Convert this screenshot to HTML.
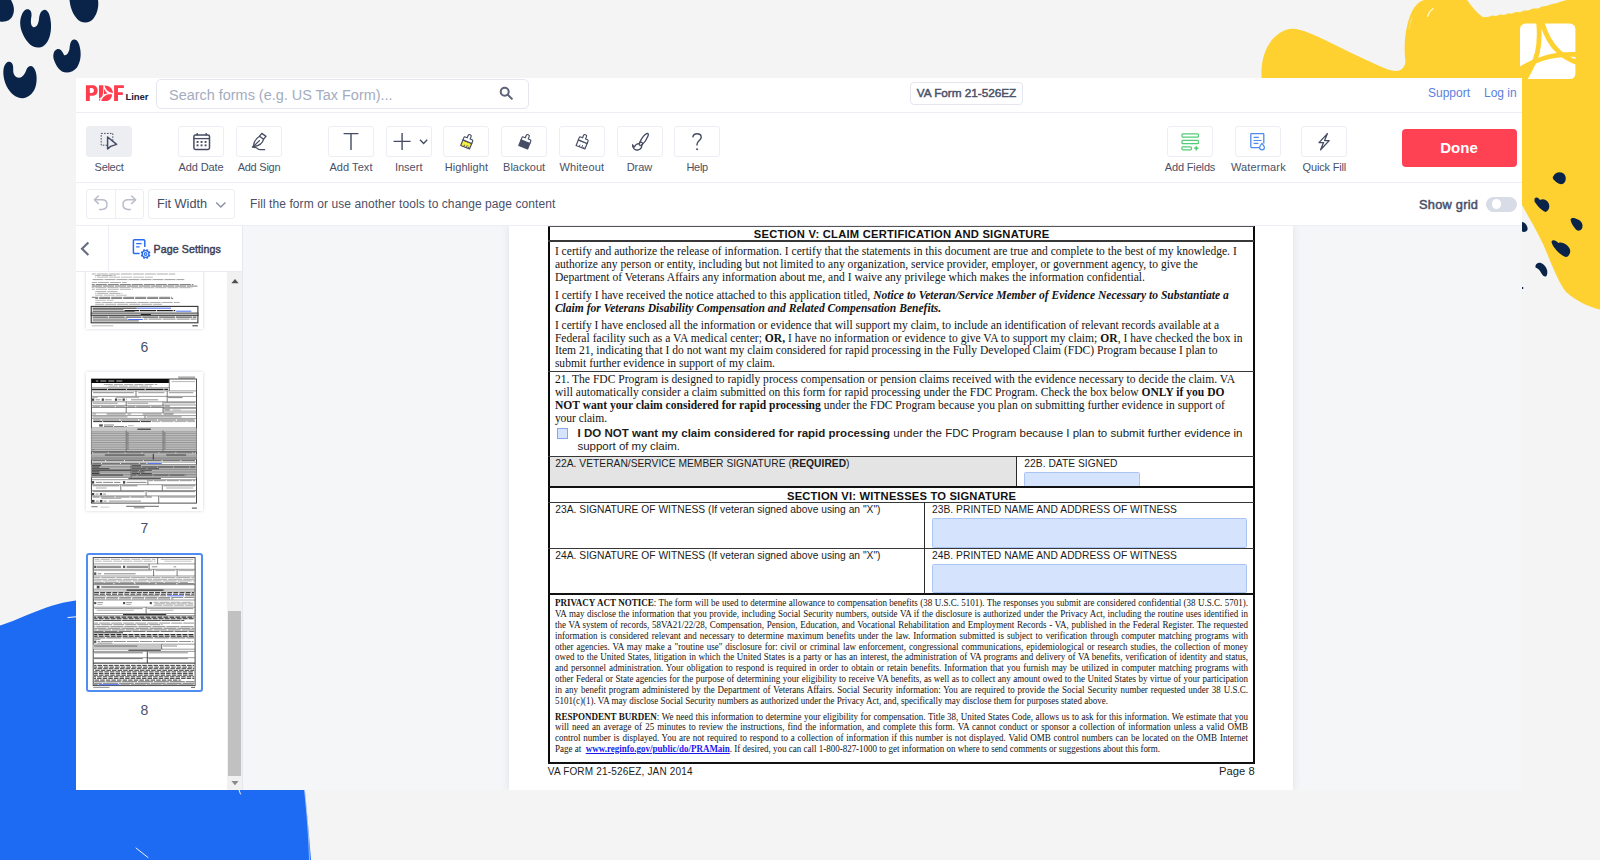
<!DOCTYPE html>
<html lang="en">
<head>
<meta charset="utf-8">
<title>VA Form 21-526EZ</title>
<style>
*{box-sizing:border-box;margin:0;padding:0}
html,body{width:1600px;height:860px;overflow:hidden}
body{background:#f4f4f4;font-family:"Liberation Sans",sans-serif;color:#454b60;position:relative}
.abs{position:absolute}
#bg{position:absolute;left:0;top:0;width:1600px;height:860px}
#app{position:absolute;left:76px;top:78px;width:1446px;height:712px;background:#fff;overflow:hidden}
#hdr{position:absolute;left:0;top:0;width:1446px;height:35px;border-bottom:1px solid #eceef3;background:#fff}
#tb{position:absolute;left:0;top:35px;width:1446px;height:70px;border-bottom:1px solid #eceef3;background:#fff}
#row3{position:absolute;left:0;top:105px;width:1446px;height:43px;border-bottom:1px solid #eceef3;background:#fff}
#side{position:absolute;left:0;top:148px;width:167px;height:564px;background:#fff;border-right:1px solid #e6e8ee;overflow:hidden}
#main{position:absolute;left:167px;top:148px;width:1279px;height:564px;background:#f5f6f8;overflow:hidden}
#page{position:absolute;left:266px;top:0;width:784px;height:564px;background:#fff;box-shadow:0 0 8px rgba(120,130,160,.18)}
.tbtn{position:absolute;top:13px;width:46px;height:31px;border:1px solid #eceef3;border-radius:3px;background:#fff}
.tbtn.sel{background:#eceef2;border-color:#eceef2}
.tbtn svg{position:absolute;left:-1px;top:-1px;width:46px;height:31px}
.tlbl{position:absolute;top:47px;width:90px;margin-left:-22px;text-align:center;font-size:11px;line-height:14px;color:#4a5068;white-space:nowrap}
.num{width:117px;text-align:center;font-size:14px;line-height:16px;color:#4a5068}

.s{font-family:"Liberation Serif",serif;color:#141414;white-space:nowrap;line-height:normal}
.a{font-family:"Liberation Sans",sans-serif;color:#1c1c1c;white-space:nowrap;line-height:normal}
.ab{font-family:"Liberation Sans",sans-serif;font-weight:bold;color:#111;white-space:nowrap;line-height:normal}
.lnk{color:#1a1aee;text-decoration:underline;font-weight:bold}
</style>
</head>
<body>
<svg id="bg" viewBox="0 0 1600 860">

<!-- yellow blob -->
<path fill="#fed130" d="M1262,82 C1259,58 1268,36 1287,29.5 C1298,26.5 1312,34 1330,42.5 C1350,52 1372,63.5 1388,69.5 C1397,72.5 1404,71 1405.5,62 C1403,44 1406,22 1413,9.5 C1417,3.5 1421,0 1425,0 L1467,0 C1471,5 1476,12.5 1483,17.2 L1489,16.8 L1492,15.6 L1496,15.9 L1500,14.6 L1504,14.9 L1508,13.4 L1512,13.6 L1516,12 L1520,12.2 L1524,10.4 L1528,10.5 L1533,8.6 L1538,8.4 L1542,6.4 L1547,5.8 L1552,4 L1557,3 L1562,1.2 L1567,0 L1600,0 L1600,309.5 C1592,307.5 1578,303 1566,292 C1557,280 1551,262 1543,244 C1536,229 1529,218 1521,203 L1521,82 Z"/>
<path fill="none" stroke="#fff4c8" stroke-width="1.3" stroke-linecap="round" d="M1427.5,16.5 C1428.5,13.5 1430.5,10.5 1433,8.6"/>
<path fill="none" stroke="#ffe27a" stroke-width="1" stroke-linecap="round" d="M1409.5,29 C1409.8,25 1410.5,21 1412,18"/>
<!-- white logo square -->
<rect x="1520" y="23.6" width="55.4" height="55.4" rx="5.5" fill="#fff"/>
<g fill="none" stroke="#fed130" stroke-width="4.8">
<path d="M1538.6,22 C1540.3,40 1538.8,55 1532,66 C1530,70 1527.5,75 1524,81"/>
<path d="M1541.8,22 C1546,36 1552,46 1559,52 C1564,56.5 1570,60 1577,62.5"/>
<path d="M1518,70.5 C1528,64 1538,59.5 1548,57 C1556,55 1562,54 1577,54.5"/>
</g>
<path fill="#fed130" d="M1519,70 L1530,64.5 L1525,80 L1519,80 Z"/>
<path fill="#fed130" d="M1537,22 L1544,22 L1541,30 Z"/>
<!-- navy dots on yellow -->
<g fill="#0a2449">
<path d="M1553.5,176 C1555,172.5 1560,171 1563.5,173.5 C1566.5,176 1566.5,181 1563.5,183.5 C1560,185.5 1556.5,182.5 1553.5,179.5 C1552.5,178 1552.5,177 1553.5,176 Z"/>
<path d="M1534.5,199 C1536,196.5 1538.5,197.5 1540,200 C1543,198.5 1546.5,199.5 1548.5,203 C1550.5,207 1548.5,211 1545.5,212 C1541.5,210.5 1537,205.5 1534.5,201.5 Z"/>
<path d="M1570.5,219.5 C1572,217 1575,218 1578,219.5 C1582,221.5 1583.5,225 1582,228.5 C1580.5,231 1577.5,231.5 1575.5,229 C1573,226 1571,223 1570.5,219.5 Z"/>
<path d="M1551.5,241.5 C1553,239 1556,240.5 1558.5,243 C1562,241.5 1566.5,244 1569,247.5 C1571.5,251 1570,255.5 1566.5,257 C1562.5,256.5 1558,252.5 1555,248.5 C1553,246 1551.5,243.5 1551.5,241.5 Z"/>
<path d="M1535.5,265.5 C1537,262 1540.5,262 1543.5,264.5 C1547,267.5 1548.5,272 1546.5,276 C1545,277.5 1543,276 1541.5,273.5 C1540,270.5 1538.5,268.5 1535.5,267.5 Z"/>
<path d="M1522,222 C1525.5,222.5 1528,226 1527.5,229.5 C1527,231.5 1524.5,232.5 1522,231.5 Z"/>
<rect x="1522" y="287" width="1.2" height="2"/>
</g>
<!-- navy blobs top-left -->
<g fill="#0a2449">
<path d="M0,0 L11,0 C14,5 15,11 12.5,16 C10.5,20 6,22.5 0,21.5 Z"/>
<path d="M26,9.5 C29.5,8.5 32,11 31.5,16 C30.5,21 30.5,26 33.5,27.2 C36.5,27.5 38.5,24 39,19 C39.5,13.5 41.5,9.8 45,9.8 C48.5,10.5 50.5,16 51,24 C51.5,33 49,42 43.5,46 C39.5,48.5 34,48 30,44.5 C24.5,39 20.5,31 20.2,24 C20,17.5 22.5,11 26,9.5 Z"/>
<path d="M69.5,0 L98,0 C99,6 97.5,13 93.5,18.5 C90.5,22.5 85,23.5 80.5,21.5 C75,18.5 70.5,10 69.5,0 Z"/>
<path d="M73,39.8 C76.5,38.8 79,42 80,48 C81.5,55 80.5,62 77,67.5 C73.5,72 67,73.8 62,71.5 C58,69 55.5,64.5 54,60 C52.5,55.5 53.5,50.5 57,49.2 C60.5,48.5 62.5,51.5 64,55 C66.5,56 68.5,53 69.5,49 C70,44.5 70.5,40.8 73,39.8 Z"/>
<path d="M8.5,61.8 C12,61 13.5,65 13.2,69.5 C13,74 15,77.5 19,77.8 C23,77.5 25,73.5 26.5,69.5 C28,66 31,65 33.5,67.5 C36.5,71 37.5,78 36,85 C34.5,92 29.5,97.5 23,98.3 C16,98.5 10,93 6.5,86 C3.5,79.5 2.5,72 4,67 C5,64 6.5,62.3 8.5,61.8 Z"/>
</g>
<!-- blue blob bottom-left -->
<path fill="#1d6af3" d="M0,625.5 C10,622.5 22,617 36,611.5 C50,606 64,601.5 80,600 L200,600 L296,700 C301,750 308,820 311,860 L0,860 Z"/>
<g fill="none" stroke="#f3f3f3" stroke-width="1" stroke-linecap="round">
<path d="M68,617.5 L76,616.8"/>
<path d="M136,848 L148,857.5"/>
<path d="M239,790 L240.5,794"/>
<path d="M304.5,790 C307,812 309,840 309.5,860" stroke-width=".7" stroke="#cfe0ff"/>
</g>

</svg>
<div id="app">
  <div id="hdr">

<svg class="abs" style="left:0;top:0" width="80" height="35" viewBox="76 78 80 35">
<g fill="#ff3d4d">
<path fill-rule="evenodd" d="M85.9,85.2 h6.1 c3.8,0 5.6,2 5.6,5.2 c0,3.4 -2,5.4 -5.8,5.4 h-2 v5.2 h-3.9 z M89.8,88 v5 h1.7 c1.6,0 2.4,-.9 2.4,-2.5 c0,-1.6 -.8,-2.5 -2.4,-2.5 z"/>
<path d="M99,85.3 H103.3 C103.4,89 103.3,93 102.6,95.3 C102,97 100.9,98 99,98.5 Z"/>
<path d="M99.1,99.2 L100.7,98.5 L99.9,100.5 L99.1,100.9 Z"/>
<path d="M104.5,85.4 C108.9,85.1 112.5,88 113,92.9 C110.2,92.8 105.8,90.8 104.5,85.4 Z"/>
<path d="M103.9,88.6 C104.8,90.6 106,92.3 107.5,93.4 L103.9,94.2 Z"/>
<path d="M101.1,101 H106 C109.4,101 111.7,98.6 112.1,94.5 C108,93.8 103.4,95.4 101.1,101 Z"/>
<path d="M114.1,85.2 H123.9 V88 H118 V92.3 H122.8 V94.9 H118 V101 H114.1 Z"/>
</g>
</svg>
<div class="abs" style="left:49.5px;top:13px;font-size:9.6px;font-weight:bold;color:#1b2340;line-height:11px;letter-spacing:-.1px">Liner</div>
<div class="abs" style="left:80px;top:1px;width:373px;height:30px;border:1px solid #e4e7f0;border-radius:5px"></div>
<div class="abs" id="ph" style="left:93px;top:8px;font-size:14.45px;line-height:18px;color:#a4acc0;white-space:nowrap">Search forms (e.g. US Tax Form)...</div>
<svg class="abs" style="left:420px;top:6px" width="20" height="20" viewBox="0 0 20 20"><circle cx="8.7" cy="7.8" r="4" fill="none" stroke="#5d6378" stroke-width="2"/><path d="M11.7,10.8 L15.8,14.7" stroke="#5d6378" stroke-width="2" stroke-linecap="round"/></svg>
<div class="abs" style="left:834px;top:4px;width:113px;height:23px;border:1px solid #e4e7f0;border-radius:4px"></div>
<div class="abs" id="ttl" style="left:834px;top:4px;width:113px;height:23px;line-height:22px;text-align:center;font-size:11.8px;font-weight:normal;-webkit-text-stroke:.45px #4a5068;letter-spacing:-.05px;color:#4a5068;white-space:nowrap">VA Form 21-526EZ</div>
<div class="abs" id="sup" style="left:1352px;top:7px;font-size:12px;line-height:16px;color:#5b80dd;white-space:nowrap">Support</div>
<div class="abs" id="log" style="left:1408px;top:7px;font-size:12px;line-height:16px;color:#5b80dd;white-space:nowrap">Log in</div>

  </div>
  <div id="tb">
<div class="tbtn sel" style="left:10px"><svg viewBox="0 0 46 31"><rect x="15.2" y="7.4" width="11.6" height="11.8" fill="none" stroke="#454c63" stroke-width="1" stroke-dasharray="1.6 1.3"/><path d="M21.6,11 L21.6,23 L24.6,20.4 L30.6,18.4 Z" fill="#eceef2" stroke="#454c63" stroke-width="1.5" stroke-linejoin="round"/></svg></div><div class="tlbl" id="l_select" style="letter-spacing:-0.300px;left:10px">Select</div>
<div class="tbtn" style="left:102px"><svg viewBox="0 0 46 31"><rect x="15.9" y="9" width="15.6" height="14.4" rx="1.6" fill="none" stroke="#454c63" stroke-width="1.5"/><path d="M15.9,12.6 H31.5" stroke="#454c63" stroke-width="1.3"/><path d="M19.2,7 V9.6 M28.2,7 V9.6" stroke="#454c63" stroke-width="1.3"/><g fill="#454c63"><rect x="18.6" y="15" width="1.9" height="1.9"/><rect x="22.6" y="15" width="1.9" height="1.9"/><rect x="26.6" y="15" width="1.9" height="1.9"/><rect x="18.6" y="18.4" width="1.9" height="1.9"/><rect x="22.6" y="18.4" width="1.9" height="1.9"/><rect x="26.6" y="18.4" width="1.9" height="1.9"/></g></svg></div><div class="tlbl" id="l_date" style="letter-spacing:-0.112px;left:102px">Add Date</div>
<div class="tbtn" style="left:160px"><svg viewBox="0 0 46 31"><g fill="none" stroke="#454c63" stroke-width="1.3" stroke-linejoin="round" stroke-linecap="round"><path d="M17.3,20.6 C17.8,16.2 19.8,12.4 23.6,10.2 L27.6,13.2 C26.6,17.4 23.2,20 17.3,20.6 Z"/><path d="M23.6,10.2 L25.8,7.4 L30,10.4 L27.6,13.2"/><path d="M17.3,20.6 L23.4,14.6"/><path d="M16.4,21 C19,21.2 20.8,21.6 21.6,22.6 C22.2,23.4 23,23.7 24.4,23.7 L28.6,23.7"/></g></svg></div><div class="tlbl" id="l_sign" style="letter-spacing:-0.238px;left:160px">Add Sign</div>
<div class="tbtn" style="left:252px"><svg viewBox="0 0 46 31"><path d="M15.6,7.6 H30.4 M23,7.6 V24" stroke="#454c63" stroke-width="1.4" fill="none"/></svg></div><div class="tlbl" id="l_text" style="letter-spacing:0.050px;left:252px">Add Text</div>
<div class="tbtn" style="left:309.7px"><svg viewBox="0 0 46 31"><path d="M7.6,15.4 H24.6 M16.1,7 V24" stroke="#454c63" stroke-width="1.4" fill="none"/><path d="M34,13.8 L37.6,17.4 L41.2,13.8" stroke="#454c63" stroke-width="1.4" fill="none"/></svg></div><div class="tlbl" id="l_insert" style="letter-spacing:0.017px;left:309.7px">Insert</div>
<div class="tbtn" style="left:367.4px"><svg viewBox="0 0 46 31"><g transform="translate(24.2,16) rotate(22) scale(.88)"><path d="M-5.4,-0.4 H5.4 V6.4 H-5.4 Z" fill="#f6ee3c" stroke="#454c63" stroke-width="1.3" stroke-linejoin="round"/><path d="M-1.6,6.4 V4 M1.4,6.4 V3.4 M3.6,6.4 V4.4" stroke="#454c63" stroke-width="1"/><path d="M-5.4,-0.4 V-3.2 C-5.4,-4 -5,-4.4 -4.2,-4.4 H-1.8 V-7.6 C-1.8,-9.4 1.8,-9.4 1.8,-7.6 V-4.4 H4.2 C5,-4.4 5.4,-4 5.4,-3.2 V-0.4 Z" fill="#fff" stroke="#454c63" stroke-width="1.3" stroke-linejoin="round"/></g></svg></div><div class="tlbl" id="l_hl" style="letter-spacing:0.044px;left:367.4px">Highlight</div>
<div class="tbtn" style="left:425.1px"><svg viewBox="0 0 46 31"><g transform="translate(24.3,16) rotate(22) scale(.88)"><path d="M-5.4,-0.4 H5.4 V6.4 H-5.4 Z" fill="#454c63" stroke="#454c63" stroke-width="1.3" stroke-linejoin="round"/><path d="M-5.4,-0.4 V-3.2 C-5.4,-4 -5,-4.4 -4.2,-4.4 H-1.8 V-7.6 C-1.8,-9.4 1.8,-9.4 1.8,-7.6 V-4.4 H4.2 C5,-4.4 5.4,-4 5.4,-3.2 V-0.4 Z" fill="#fff" stroke="#454c63" stroke-width="1.3" stroke-linejoin="round"/></g></svg></div><div class="tlbl" id="l_bo" style="letter-spacing:-0.025px;left:425.1px">Blackout</div>
<div class="tbtn" style="left:482.8px"><svg viewBox="0 0 46 31"><g transform="translate(23.6,16) rotate(22) scale(.88)"><path d="M-5.4,-0.4 H5.4 V6.4 H-5.4 Z" fill="#fff" stroke="#454c63" stroke-width="1.3" stroke-linejoin="round"/><path d="M-1.6,6.4 V4 M1.4,6.4 V3.4 M3.6,6.4 V4.4" stroke="#454c63" stroke-width="1"/><path d="M-5.4,-0.4 V-3.2 C-5.4,-4 -5,-4.4 -4.2,-4.4 H-1.8 V-7.6 C-1.8,-9.4 1.8,-9.4 1.8,-7.6 V-4.4 H4.2 C5,-4.4 5.4,-4 5.4,-3.2 V-0.4 Z" fill="#fff" stroke="#454c63" stroke-width="1.3" stroke-linejoin="round"/></g></svg></div><div class="tlbl" id="l_wo" style="letter-spacing:0.175px;left:482.8px">Whiteout</div>
<div class="tbtn" style="left:540.5px"><svg viewBox="0 0 46 31"><g fill="none" stroke="#454c63" stroke-width="1.3" stroke-linejoin="round" stroke-linecap="round"><path d="M22.6,16.6 C25,11.6 28.2,8 30.2,7.4 C31.4,7.2 31.6,8.6 31,10 C29.6,13.6 27.6,16.6 25,18.8"/><ellipse cx="23.8" cy="17.8" rx="1.8" ry="1.5" transform="rotate(-40 23.8 17.8)"/><path d="M22.2,17.6 C19.6,17.6 18,19.4 17.4,21 C16.8,20.6 16.2,19.8 15.6,18.8 C15,22.4 18.6,24.6 21.4,23.8 C23.6,23.2 24.8,21.4 24.8,19.2"/></g></svg></div><div class="tlbl" id="l_draw" style="letter-spacing:-0.025px;left:540.5px">Draw</div>
<div class="tbtn" style="left:598.2px"><svg viewBox="0 0 46 31"><path d="M18.8,11.4 C19.2,8.8 20.8,7.8 23,7.8 C25.6,7.8 27.2,9.2 27.2,11.2 C27.2,14.6 23,14.6 23,18.6 V19.6" fill="none" stroke="#454c63" stroke-width="1.4"/><rect x="22.2" y="22.4" width="1.7" height="1.7" fill="#454c63"/></svg></div><div class="tlbl" id="l_help" style="letter-spacing:-0.300px;left:598.2px">Help</div>
<div class="tbtn" style="left:1091px"><svg viewBox="0 0 46 31"><g fill="none" stroke="#52cc76" stroke-width="1.2"><rect x="14.9" y="7.8" width="16.6" height="3.3" rx="1"/><rect x="14.9" y="14.4" width="16.6" height="3.3" rx="1"/><rect x="14.9" y="20.8" width="9.6" height="3" rx="1"/></g><path d="M29.3,20.2 V24.4 M27.2,22.3 H31.4" stroke="#52cc76" stroke-width="1.6"/></svg></div><div class="tlbl" id="l_fields" style="letter-spacing:-0.160px;left:1091px">Add Fields</div>
<div class="tbtn" style="left:1159.4px"><svg viewBox="0 0 46 31"><g fill="none" stroke="#4d8bf1"><path d="M26.2,21.6 H16.6 C16.1,21.6 15.8,21.3 15.8,20.8 V8.4 C15.8,7.9 16.1,7.6 16.6,7.6 H28 C28.5,7.6 28.8,7.9 28.8,8.4 V17.6" stroke-width="1.3"/><path d="M18.6,11.4 H23.8 M18.6,14.5 H26.6 M18.6,17.3 H23.4" stroke-width="1.2"/><path d="M27,17.4 C28.2,18.8 29.4,20 29.4,21.5 C29.4,22.9 28.3,23.8 27,23.8 C25.7,23.8 24.6,22.9 24.6,21.5 C24.6,20 25.8,18.8 27,17.4 Z" stroke-width="1.2" fill="#fff"/></g></svg></div><div class="tlbl" id="l_wm" style="letter-spacing:0.178px;left:1159.4px">Watermark</div>
<div class="tbtn" style="left:1225.3px"><svg viewBox="0 0 46 31"><path d="M26.4,7.6 L18,16.6 H22.6 L19.6,23.8 L28.2,14.6 H23.6 Z" fill="none" stroke="#454c63" stroke-width="1.3" stroke-linejoin="round"/></svg></div><div class="tlbl" id="l_qf" style="letter-spacing:-0.180px;left:1225.3px">Quick Fill</div>
<div class="abs" id="done" style="left:1325.5px;top:16px;width:115px;height:38px;border-radius:4px;background:#ff4253;color:#fff;font-weight:bold;font-size:15px;line-height:37px;text-align:center">Done</div>

  </div>
  <div id="row3">

<div class="abs" style="left:10px;top:6px;width:29.5px;height:29.5px;border:1px solid #eceef3;border-radius:3px 0 0 3px"></div>
<div class="abs" style="left:38.5px;top:6px;width:29.5px;height:29.5px;border:1px solid #eceef3;border-radius:0 3px 3px 0"></div>
<svg class="abs" style="left:10px;top:6px" width="58" height="30" viewBox="0 0 58 30"><g fill="none" stroke="#b9bdc9" stroke-width="1.5" stroke-linecap="round" stroke-linejoin="round"><path d="M12.4,7 L8.4,10.8 L12.4,14.6"/><path d="M8.6,10.8 H16 C19.2,10.8 21,12.8 21,15.6 C21,18.4 19.2,20.4 16,20.4 H13.6"/><path d="M45.6,7 L49.6,10.8 L45.6,14.6"/><path d="M49.4,10.8 H42 C38.8,10.8 37,12.8 37,15.6 C37,18.4 38.8,20.4 42,20.4 H44.4"/></g></svg>
<div class="abs" style="left:72px;top:6px;width:87px;height:29.5px;border:1px solid #eceef3;border-radius:3px"></div>
<div class="abs" id="fitw" style="left:81px;top:13px;font-size:12.7px;line-height:16px;color:#454c63;white-space:nowrap">Fit Width</div>
<svg class="abs" style="left:138px;top:15.6px" width="14" height="12" viewBox="0 0 14 12"><path d="M2.2,3.6 L6.8,8 L11.4,3.6" fill="none" stroke="#8a90a2" stroke-width="1.4"/></svg>
<div class="abs" id="fill" style="left:174px;top:14px;font-size:12px;letter-spacing:.08px;line-height:14px;color:#4a5068;white-space:nowrap">Fill the form or use another tools to change page content</div>
<div class="abs" id="sg" style="left:1343px;top:14px;font-size:12.8px;font-weight:normal;-webkit-text-stroke:.5px #4a5068;letter-spacing:.25px;line-height:16px;color:#4a5068;white-space:nowrap">Show grid</div>
<div class="abs" style="left:1410px;top:13.5px;width:30.5px;height:15.5px;border-radius:8px;background:#d8dce7"></div>
<div class="abs" style="left:1415.6px;top:16.3px;width:9.4px;height:9.4px;border-radius:5px;background:#fff"></div>

  </div>
  <div id="side">
<!--SIDE_START-->
<div class="abs" style="left:0;top:0;width:166px;height:46px;background:#fff;border-bottom:1px solid #e9ebf0;z-index:3"></div>
<div class="abs" style="left:32px;top:0;width:1px;height:45px;background:#eceef3;z-index:4"></div>
<svg class="abs" style="left:0;top:0;z-index:4" width="32" height="45" viewBox="0 0 32 45"><path d="M12.4,16.6 L6,22.8 L12.4,29" fill="none" stroke="#656b80" stroke-width="2.1"/></svg>
<svg class="abs" style="left:54px;top:10px;z-index:4" width="24" height="26" viewBox="0 0 24 26"><g fill="none" stroke="#2a6cf0" stroke-width="1.5" stroke-linejoin="round"><path d="M9.6,17.6 H4.6 C3.8,17.6 3.4,17.2 3.4,16.4 V5 C3.4,4.2 3.8,3.8 4.6,3.8 H13.6 C14.4,3.8 14.8,4.2 14.8,5 V11"/><path d="M6.2,7.6 H11.6 M6.2,10.8 H9.6" stroke-width="1.3"/><circle cx="15.6" cy="18.0" r="5.2" fill="#fff" stroke="none"/><path d="M18.83,19.34L20.13,19.88M16.94,21.23L17.48,22.53M14.26,21.23L13.72,22.53M12.37,19.34L11.07,19.88M12.37,16.66L11.07,16.12M14.26,14.77L13.72,13.47M16.94,14.77L17.48,13.47M18.83,16.66L20.13,16.12" stroke-width="1.9" stroke-linecap="butt"/><circle cx="15.6" cy="18.0" r="3.3" stroke-width="1.3" fill="#fff"/><circle cx="15.6" cy="18.0" r="1.35" stroke-width="1.1"/></g></svg>
<div class="abs" id="pset" style="left:77.5px;top:16px;font-size:10.6px;font-weight:normal;-webkit-text-stroke:.45px #3d4258;line-height:14px;color:#3d4258;white-space:nowrap;z-index:4;letter-spacing:.12px">Page Settings</div>
<div class="abs" style="left:10px;top:-36px;width:117px;height:139px;background:#fff;box-shadow:0 0 3px rgba(90,100,130,.28)"><svg width="117" height="139" viewBox="0 0 117 139" fill="none"><path d="M5.8,84.0H89.2" stroke="#999" stroke-width="0.8" stroke-dasharray="11 1" stroke-dashoffset="7.0"/><path d="M9.2,85.6H29.5" stroke="#999" stroke-width="0.8" stroke-dasharray="11 1" stroke-dashoffset="5.5"/><path d="M9.2,87.2H66.9" stroke="#aaa" stroke-width="0.8" stroke-dasharray="11 1" stroke-dashoffset="10.1"/><path d="M5.8,89.6H98.3" stroke="#888" stroke-width="0.8" stroke-dasharray="11 1" stroke-dashoffset="11.3"/><path d="M5.8,92.5H40.6" stroke="#999" stroke-width="0.8" stroke-dasharray="11 1" stroke-dashoffset="5.7"/><path d="M5.8,94.7H107.4" stroke="#444" stroke-width="0.8" stroke-dasharray="11 1" stroke-dashoffset="8.0"/><path d="M5.8,96.1H111.5" stroke="#666" stroke-width="0.8" stroke-dasharray="11 1" stroke-dashoffset="0.7"/><path d="M5.8,97.7H106.4" stroke="#999" stroke-width="0.8" stroke-dasharray="11 1" stroke-dashoffset="8.4"/><path d="M5.8,99.4H46.7" stroke="#aaa" stroke-width="0.8" stroke-dasharray="11 1" stroke-dashoffset="7.8"/><path d="M9.2,101.6H31.5" stroke="#999" stroke-width="0.8" stroke-dasharray="11 1" stroke-dashoffset="11.9"/><path d="M9.2,103.4H36.2" stroke="#999" stroke-width="0.8" stroke-dasharray="11 1" stroke-dashoffset="9.9"/><path d="M9.2,105.2H41.0" stroke="#aaa" stroke-width="0.8" stroke-dasharray="11 1" stroke-dashoffset="3.4"/><path d="M5.8,107.3H86.2" stroke="#555" stroke-width="0.8" stroke-dasharray="11 1" stroke-dashoffset="4.6"/><path d="M9.2,108.5H87.2" stroke="#666" stroke-width="0.8" stroke-dasharray="11 1" stroke-dashoffset="8.0"/><path d="M9.2,110.3H27.4" stroke="#aaa" stroke-width="0.8" stroke-dasharray="11 1" stroke-dashoffset="0.3"/><path d="M9.2,112.5H93.6" stroke="#999" stroke-width="0.8" stroke-dasharray="11 1" stroke-dashoffset="5.5"/><path d="M9.2,114.3H76.0" stroke="#999" stroke-width="0.8" stroke-dasharray="11 1" stroke-dashoffset="2.0"/><rect x="5.2" y="116.4" width="106.7" height="16.4" fill="none" stroke="#333" stroke-width="1.1"/><path d="M6.6,118.2H50.7" stroke="#333" stroke-width="1"/><path d="M50.7,118.2H85.1" stroke="#4b6df0" stroke-width="1"/><path d="M6.6,119.8H37.6" stroke="#555" stroke-width="0.9"/><path d="M38.6,120.6H89.2" stroke="#222" stroke-width="1.1" stroke-dasharray="16 .8" stroke-dashoffset="1.4"/><path d="M90.2,121.2H105.4" stroke="#4b6df0" stroke-width="1"/><path d="M6.6,121.4H48.7" stroke="#555" stroke-width="0.9"/><rect x="5.2" y="123.0" width="106.7" height="2.6" fill="#bbb" stroke="#333" stroke-width="0.8"/><path d="M54.8,124.5H64.9" stroke="#222" stroke-width="1"/><path d="M6.6,127.1H110.4" stroke="#333" stroke-width="1" stroke-dasharray="16 .8" stroke-dashoffset="0.7"/><path d="M6.6,129.1H41.6" stroke="#555" stroke-width="0.9"/><path d="M42.2,129.5H56.8" stroke="#4b6df0" stroke-width="1"/><path d="M57.8,129.1H110.4" stroke="#666" stroke-width="0.8" stroke-dasharray="13 1" stroke-dashoffset="9.2"/><path d="M6.6,130.9H52.8" stroke="#555" stroke-width="0.9"/><path d="M5.8,135.8H27.4" stroke="#999" stroke-width="0.7"/><path d="M106.4,135.8H111.9" stroke="#333" stroke-width="1"/></svg></div>
<div class="abs num" style="left:10px;top:113px">6</div>
<div class="abs" style="left:10px;top:145.5px;width:117px;height:139px;background:#fff;box-shadow:0 0 3px rgba(90,100,130,.28)"><svg width="117" height="139" viewBox="0 0 117 139" fill="none"><path d="M92.0,5.1H109.1" stroke="#666" stroke-width="0.8"/><path d="M92.9,6.3H109.1" stroke="#888" stroke-width="0.7"/><rect x="5.4" y="7.0" width="105.1" height="124.1" fill="none" stroke="#3a3a3a" stroke-width="0.9"/><rect x="5.4" y="7.0" width="77.5" height="4.0" fill="#0a0a0a"/><path d="M9.9,9.0H37.0" stroke="#ddd" stroke-width="0.8" stroke-dasharray="6 2" stroke-dashoffset="3.6"/><path d="M83.3,7.0V18.9" stroke="#444" stroke-width="0.7"/><path d="M85.7,9.6H109.1" stroke="#999" stroke-width="0.7"/><path d="M17.1,12.5H71.2" stroke="#888" stroke-width="0.7" stroke-dasharray="9 1.2" stroke-dashoffset="9.5"/><path d="M20.7,14.1H65.8" stroke="#888" stroke-width="0.7" stroke-dasharray="9 1.2" stroke-dashoffset="8.4"/><path d="M5.4,15.7H83.3" stroke="#555" stroke-width="0.6"/><path d="M6.0,17.3H82.1" stroke="#222" stroke-width="1.2" stroke-dasharray="18 .8" stroke-dashoffset="2.9"/><path d="M5.4,18.9H110.5" stroke="#555" stroke-width="0.6"/><path d="M5.4,24.4H110.5" stroke="#555" stroke-width="0.6"/><path d="M5.4,29.8H110.5" stroke="#555" stroke-width="0.6"/><path d="M5.4,35.5H110.5" stroke="#555" stroke-width="0.6"/><path d="M5.4,40.9H110.5" stroke="#555" stroke-width="0.6"/><path d="M5.4,46.4H110.5" stroke="#555" stroke-width="0.6"/><path d="M5.4,55.9H110.5" stroke="#555" stroke-width="0.6"/><path d="M5.4,58.3H110.5" stroke="#555" stroke-width="0.6"/><path d="M7.2,20.7H47.8" stroke="#666" stroke-width="0.8"/><path d="M52.3,20.7H78.4" stroke="#777" stroke-width="0.8"/><path d="M83.0,20.7H107.3" stroke="#777" stroke-width="0.8"/><path d="M50.0,18.9V24.4" stroke="#444" stroke-width="0.7"/><path d="M81.2,18.9V29.8" stroke="#444" stroke-width="0.7"/><path d="M6.3,25.6H11.7" stroke="#888" stroke-width="0.7"/><path d="M29.8,25.6H53.2" stroke="#888" stroke-width="0.7"/><path d="M82.1,25.6H96.5" stroke="#666" stroke-width="0.8"/><rect x="6.0" y="26.5" width="2.2" height="2.3" fill="#444"/><rect x="15.7" y="26.5" width="2.2" height="2.3" fill="#444"/><rect x="28.9" y="26.5" width="2.2" height="2.3" fill="#444"/><rect x="36.6" y="26.5" width="2.2" height="2.3" fill="#444"/><path d="M9.6,27.8H13.9" stroke="#777" stroke-width="0.8"/><path d="M18.9,27.8H25.8" stroke="#777" stroke-width="0.8"/><path d="M31.9,27.8H35.5" stroke="#777" stroke-width="0.8"/><path d="M39.9,27.8H40.9" stroke="#777" stroke-width="0.8"/><path d="M45.1,27.8H72.1" stroke="#777" stroke-width="0.8"/><path d="M40.2,29.8V40.9" stroke="#444" stroke-width="0.7"/><path d="M77.0,29.8V40.9" stroke="#444" stroke-width="0.7"/><path d="M6.7,31.2H31.6" stroke="#777" stroke-width="0.8"/><path d="M41.5,31.2H62.2" stroke="#777" stroke-width="0.8"/><path d="M78.1,30.8H109.1" stroke="#666" stroke-width="0.8"/><path d="M5.4,33.4H77.0" stroke="#666" stroke-width="0.6"/><path d="M6.7,34.8H38.8" stroke="#666" stroke-width="0.8" stroke-dasharray="14 1" stroke-dashoffset="6.9"/><path d="M41.5,34.8H75.7" stroke="#666" stroke-width="0.8" stroke-dasharray="14 1" stroke-dashoffset="6.3"/><path d="M77.0,33.0H110.5" stroke="#555" stroke-width="0.6"/><path d="M78.4,34.1H83.9" stroke="#555" stroke-width="0.8"/><path d="M77.0,36.6H110.5" stroke="#555" stroke-width="0.6"/><path d="M78.4,37.9H83.9" stroke="#555" stroke-width="0.8"/><path d="M86.6,37.9H94.7" stroke="#aaa" stroke-width="0.7"/><path d="M77.0,39.1H110.5" stroke="#555" stroke-width="0.6"/><path d="M6.7,42.0H9.9" stroke="#777" stroke-width="0.8"/><path d="M20.7,42.0H39.7" stroke="#666" stroke-width="0.8"/><path d="M41.5,42.0H45.1" stroke="#777" stroke-width="0.8"/><path d="M56.8,42.0H75.7" stroke="#666" stroke-width="0.8"/><path d="M77.5,42.0H87.5" stroke="#555" stroke-width="0.9"/><path d="M5.4,43.6H110.5" stroke="#555" stroke-width="0.6"/><path d="M59.0,43.6V46.4" stroke="#444" stroke-width="0.7"/><path d="M6.7,44.9H41.5" stroke="#777" stroke-width="0.8"/><path d="M60.8,44.9H95.6" stroke="#777" stroke-width="0.8"/><path d="M7.2,48.0H109.1" stroke="#555" stroke-width="0.9" stroke-dasharray="18 .8" stroke-dashoffset="10.5"/><path d="M7.2,49.6H64.9" stroke="#333" stroke-width="1" stroke-dasharray="18 .8" stroke-dashoffset="8.8"/><path d="M65.8,49.6H109.1" stroke="#888" stroke-width="0.7" stroke-dasharray="12 1" stroke-dashoffset="3.5"/><rect x="13.2" y="52.3" width="3.6" height="2.3" fill="#555"/><path d="M18.0,53.0H28.0" stroke="#666" stroke-width="0.8"/><path d="M18.0,54.5H40.9" stroke="#666" stroke-width="0.8" stroke-dasharray="10 1" stroke-dashoffset="11.8"/><path d="M42.0,53.7H47.8" stroke="#999" stroke-width="0.7"/><rect x="5.4" y="56.1" width="105.1" height="23.8" fill="#c8c8c8"/><path d="M51.4,57.2H64.9" stroke="#222" stroke-width="1"/><path d="M5.4,59.9H110.5" stroke="#666" stroke-width="0.5"/><path d="M5.4,61.6H110.5" stroke="#666" stroke-width="0.5"/><path d="M5.4,63.4H110.5" stroke="#666" stroke-width="0.5"/><path d="M5.4,65.2H110.5" stroke="#666" stroke-width="0.5"/><path d="M5.4,66.9H110.5" stroke="#666" stroke-width="0.5"/><path d="M5.4,68.7H110.5" stroke="#666" stroke-width="0.5"/><path d="M5.4,70.5H110.5" stroke="#666" stroke-width="0.5"/><path d="M5.4,72.2H110.5" stroke="#666" stroke-width="0.5"/><path d="M5.4,74.0H110.5" stroke="#666" stroke-width="0.5"/><path d="M5.4,75.8H110.5" stroke="#666" stroke-width="0.5"/><path d="M5.4,77.5H110.5" stroke="#666" stroke-width="0.5"/><path d="M5.4,79.3H110.5" stroke="#666" stroke-width="0.5"/><path d="M40.2,58.3V79.9" stroke="#555" stroke-width="0.6"/><path d="M77.0,58.3V79.9" stroke="#555" stroke-width="0.6"/><path d="M40.9,60.8H42.7" stroke="#666" stroke-width="0.7"/><path d="M77.7,60.8H79.5" stroke="#666" stroke-width="0.7"/><path d="M40.9,62.5H42.7" stroke="#666" stroke-width="0.7"/><path d="M77.7,62.5H79.5" stroke="#666" stroke-width="0.7"/><path d="M40.9,64.3H42.7" stroke="#666" stroke-width="0.7"/><path d="M77.7,64.3H79.5" stroke="#666" stroke-width="0.7"/><path d="M40.9,66.1H42.7" stroke="#666" stroke-width="0.7"/><path d="M77.7,66.1H79.5" stroke="#666" stroke-width="0.7"/><path d="M40.9,67.8H42.7" stroke="#666" stroke-width="0.7"/><path d="M77.7,67.8H79.5" stroke="#666" stroke-width="0.7"/><path d="M40.9,69.6H42.7" stroke="#666" stroke-width="0.7"/><path d="M77.7,69.6H79.5" stroke="#666" stroke-width="0.7"/><path d="M40.9,71.4H42.7" stroke="#666" stroke-width="0.7"/><path d="M77.7,71.4H79.5" stroke="#666" stroke-width="0.7"/><path d="M40.9,73.1H42.7" stroke="#666" stroke-width="0.7"/><path d="M77.7,73.1H79.5" stroke="#666" stroke-width="0.7"/><path d="M40.9,74.9H42.7" stroke="#666" stroke-width="0.7"/><path d="M77.7,74.9H79.5" stroke="#666" stroke-width="0.7"/><path d="M40.9,76.7H42.7" stroke="#666" stroke-width="0.7"/><path d="M77.7,76.7H79.5" stroke="#666" stroke-width="0.7"/><path d="M6.3,77.7H8.1" stroke="#666" stroke-width="0.7"/><path d="M5.4,79.9H110.5" stroke="#333" stroke-width="0.8"/><path d="M7.2,80.8H109.1" stroke="#555" stroke-width="0.9" stroke-dasharray="16 .9" stroke-dashoffset="1.4"/><rect x="5.4" y="81.9" width="105.1" height="5.6" fill="#cfcfcf"/><path d="M5.4,81.9H110.5" stroke="#555" stroke-width="0.55"/><path d="M5.4,83.9H110.5" stroke="#555" stroke-width="0.55"/><path d="M5.4,85.3H110.5" stroke="#555" stroke-width="0.55"/><path d="M5.4,86.4H110.5" stroke="#555" stroke-width="0.55"/><path d="M5.4,87.5H110.5" stroke="#555" stroke-width="0.55"/><path d="M67.3,81.9V87.5" stroke="#333" stroke-width="1"/><path d="M18.9,83.0H58.6" stroke="#333" stroke-width="0.9"/><path d="M80.2,83.0H100.1" stroke="#333" stroke-width="0.9"/><path d="M6.3,88.7H109.1" stroke="#444" stroke-width="0.9" stroke-dasharray="18 .8" stroke-dashoffset="5.0"/><path d="M6.3,91.6H60.4" stroke="#555" stroke-width="0.9" stroke-dasharray="18 .8" stroke-dashoffset="9.1"/><path d="M61.3,91.6H75.7" stroke="#4b6df0" stroke-width="1.1"/><path d="M5.4,90.2H110.5" stroke="#555" stroke-width="0.55"/><rect x="5.4" y="92.5" width="105.1" height="13.0" fill="#cdcdcd"/><path d="M5.4,92.5H110.5" stroke="#555" stroke-width="0.55"/><path d="M5.4,94.3H110.5" stroke="#555" stroke-width="0.55"/><path d="M5.4,95.9H110.5" stroke="#555" stroke-width="0.55"/><path d="M5.4,97.6H110.5" stroke="#555" stroke-width="0.55"/><path d="M5.4,99.2H110.5" stroke="#555" stroke-width="0.55"/><path d="M5.4,100.8H110.5" stroke="#555" stroke-width="0.55"/><path d="M5.4,102.4H110.5" stroke="#555" stroke-width="0.55"/><path d="M5.4,104.0H110.5" stroke="#555" stroke-width="0.55"/><path d="M5.4,105.5H110.5" stroke="#555" stroke-width="0.55"/><path d="M45.1,92.5V105.5" stroke="#444" stroke-width="0.7"/><path d="M6.0,93.4H15.3" stroke="#333" stroke-width="0.9"/><path d="M6.0,95.0H13.5" stroke="#333" stroke-width="0.9"/><path d="M6.0,96.7H23.5" stroke="#333" stroke-width="0.9"/><path d="M6.0,98.3H45.1" stroke="#333" stroke-width="0.9"/><path d="M6.0,99.9H13.5" stroke="#333" stroke-width="0.9"/><path d="M6.0,101.5H13.5" stroke="#333" stroke-width="0.9"/><path d="M6.0,103.1H37.0" stroke="#333" stroke-width="0.9"/><path d="M46.0,93.4H55.0" stroke="#444" stroke-width="0.9" stroke-dasharray="15 1" stroke-dashoffset="1.8"/><path d="M46.0,95.0H109.1" stroke="#444" stroke-width="0.9" stroke-dasharray="15 1" stroke-dashoffset="5.9"/><path d="M46.0,96.7H73.0" stroke="#444" stroke-width="0.9" stroke-dasharray="15 1" stroke-dashoffset="0.5"/><path d="M46.0,98.3H65.8" stroke="#444" stroke-width="0.9" stroke-dasharray="15 1" stroke-dashoffset="8.0"/><path d="M46.0,99.9H58.6" stroke="#444" stroke-width="0.9" stroke-dasharray="15 1" stroke-dashoffset="9.2"/><path d="M46.0,101.5H65.8" stroke="#444" stroke-width="0.9" stroke-dasharray="15 1" stroke-dashoffset="6.9"/><path d="M46.0,103.1H100.1" stroke="#444" stroke-width="0.9" stroke-dasharray="15 1" stroke-dashoffset="10.5"/><path d="M42.4,106.6H74.8" stroke="#333" stroke-width="0.9"/><path d="M5.4,107.7H110.5" stroke="#555" stroke-width="0.6"/><path d="M5.4,112.7H110.5" stroke="#555" stroke-width="0.6"/><path d="M5.4,118.5H110.5" stroke="#555" stroke-width="0.6"/><path d="M5.4,123.9H110.5" stroke="#555" stroke-width="0.6"/><path d="M61.9,107.7V112.7" stroke="#444" stroke-width="0.7"/><path d="M34.8,112.7V118.5" stroke="#444" stroke-width="0.7"/><path d="M76.3,112.7V118.5" stroke="#444" stroke-width="0.7"/><path d="M60.1,118.5V123.9" stroke="#444" stroke-width="0.7"/><path d="M72.7,123.9V131.1" stroke="#444" stroke-width="0.7"/><rect x="6.0" y="109.1" width="2.2" height="2.5" fill="#444"/><rect x="37.0" y="109.1" width="2.2" height="2.5" fill="#444"/><path d="M9.9,110.4H34.3" stroke="#666" stroke-width="0.8" stroke-dasharray="10 1" stroke-dashoffset="3.8"/><path d="M40.6,110.4H60.4" stroke="#666" stroke-width="0.8"/><path d="M63.1,108.7H109.1" stroke="#777" stroke-width="0.8" stroke-dasharray="12 1" stroke-dashoffset="8.3"/><path d="M6.7,113.8H33.4" stroke="#666" stroke-width="0.8"/><path d="M9.9,116.0H20.7" stroke="#888" stroke-width="0.7"/><path d="M36.1,113.8H51.4" stroke="#666" stroke-width="0.8"/><path d="M77.5,113.8H109.1" stroke="#666" stroke-width="0.8"/><path d="M80.2,116.0H107.3" stroke="#888" stroke-width="0.7"/><path d="M6.7,119.6H58.6" stroke="#666" stroke-width="0.8"/><path d="M61.3,119.6H109.1" stroke="#666" stroke-width="0.8"/><rect x="6.0" y="121.0" width="2.2" height="2.2" fill="#444"/><rect x="13.9" y="121.0" width="2.2" height="2.2" fill="#444"/><path d="M9.6,122.1H12.5" stroke="#777" stroke-width="0.8"/><path d="M17.1,122.1H20.0" stroke="#777" stroke-width="0.8"/><path d="M6.7,125.0H65.8" stroke="#555" stroke-width="0.8" stroke-dasharray="14 1" stroke-dashoffset="7.1"/><path d="M15.3,126.4H35.2" stroke="#888" stroke-width="0.7"/><path d="M73.9,125.0H109.1" stroke="#666" stroke-width="0.8"/><rect x="6.0" y="127.9" width="2.5" height="2.5" fill="#444"/><rect x="13.9" y="127.9" width="2.5" height="2.5" fill="#444"/><path d="M9.9,129.1H12.8" stroke="#777" stroke-width="0.8"/><path d="M17.5,129.1H20.7" stroke="#777" stroke-width="0.8"/><path d="M22.9,129.1H55.0" stroke="#777" stroke-width="0.8"/><path d="M5.4,134.7H11.7" stroke="#666" stroke-width="0.9"/><path d="M14.4,135.1H23.5" stroke="#aaa" stroke-width="0.6"/><path d="M40.2,134.3H73.0" stroke="#555" stroke-width="0.9"/><path d="M47.8,135.8H58.6" stroke="#666" stroke-width="0.8"/><path d="M105.9,136.1H110.9" stroke="#444" stroke-width="1"/></svg></div>
<div class="abs num" style="left:10px;top:293.5px">7</div>
<div class="abs" style="left:10.3px;top:327px;width:117px;height:139px;background:#fff;border:2px solid #4f8df3;border-radius:3px"></div>
<svg class="abs" style="left:10.3px;top:327px" width="117" height="139" viewBox="0 0 117 139" fill="none"><rect x="7.2" y="4.6" width="101.9" height="128.0" fill="none" stroke="#3a3a3a" stroke-width="0.9"/><path d="M7.2,10.9H109.1" stroke="#555" stroke-width="0.6"/><path d="M7.2,16.3H109.1" stroke="#555" stroke-width="0.6"/><path d="M7.2,23.0H109.1" stroke="#555" stroke-width="0.6"/><path d="M7.2,31.7H109.1" stroke="#555" stroke-width="0.6"/><path d="M7.2,36.2H109.1" stroke="#555" stroke-width="0.6"/><path d="M7.2,38.0H109.1" stroke="#555" stroke-width="0.6"/><path d="M7.2,47.0H109.1" stroke="#555" stroke-width="0.6"/><path d="M7.2,54.2H109.1" stroke="#555" stroke-width="0.6"/><path d="M7.2,60.5H109.1" stroke="#555" stroke-width="0.6"/><path d="M7.2,62.7H109.1" stroke="#555" stroke-width="0.6"/><path d="M7.2,91.2H109.1" stroke="#555" stroke-width="0.6"/><path d="M7.2,96.2H109.1" stroke="#555" stroke-width="0.6"/><path d="M7.2,98.4H109.1" stroke="#555" stroke-width="0.6"/><path d="M7.2,104.7H109.1" stroke="#555" stroke-width="0.6"/><path d="M7.2,110.1H109.1" stroke="#222" stroke-width="1"/><path d="M8.5,6.4H69.4" stroke="#999" stroke-width="0.7" stroke-dasharray="9 1.2" stroke-dashoffset="3.9"/><path d="M8.5,8.2H69.4" stroke="#999" stroke-width="0.7" stroke-dasharray="9 1.2" stroke-dashoffset="1.8"/><path d="M74.8,6.4H107.3" stroke="#999" stroke-width="0.7"/><path d="M78.4,8.2H105.5" stroke="#aaa" stroke-width="0.7"/><path d="M71.6,4.6V10.9" stroke="#444" stroke-width="0.7"/><path d="M10.8,13.3H35.2" stroke="#666" stroke-width="0.8"/><path d="M40.6,13.3H62.2" stroke="#666" stroke-width="0.8"/><path d="M10.8,14.4H35.2" stroke="#666" stroke-width="0.8"/><path d="M40.6,14.4H62.2" stroke="#666" stroke-width="0.8"/><path d="M65.8,13.8H71.2" stroke="#777" stroke-width="0.8"/><path d="M87.5,13.8H90.2" stroke="#777" stroke-width="0.8"/><rect x="8.1" y="12.7" width="2.2" height="2.3" fill="#555"/><rect x="37.0" y="12.7" width="2.2" height="2.3" fill="#555"/><path d="M63.1,10.9V16.3" stroke="#444" stroke-width="0.7"/><path d="M67.6,16.3V23.0" stroke="#444" stroke-width="0.7"/><path d="M91.1,16.3V23.0" stroke="#444" stroke-width="0.7"/><path d="M8.1,17.6H65.8" stroke="#888" stroke-width="0.7"/><path d="M69.4,17.6H89.3" stroke="#888" stroke-width="0.7"/><path d="M92.5,17.6H108.2" stroke="#888" stroke-width="0.7"/><rect x="8.1" y="19.4" width="2.2" height="2.5" fill="#555"/><path d="M11.7,20.8H15.3" stroke="#666" stroke-width="0.8"/><path d="M18.0,20.8H49.6" stroke="#666" stroke-width="0.8"/><path d="M8.1,24.6H108.2" stroke="#8a8a8a" stroke-width="0.75" stroke-dasharray="14 1" stroke-dashoffset="7.8"/><path d="M8.1,26.3H108.2" stroke="#8a8a8a" stroke-width="0.75" stroke-dasharray="14 1" stroke-dashoffset="0.9"/><path d="M8.1,27.9H108.2" stroke="#8a8a8a" stroke-width="0.75" stroke-dasharray="14 1" stroke-dashoffset="6.4"/><path d="M8.1,29.5H101.9" stroke="#8a8a8a" stroke-width="0.75" stroke-dasharray="14 1" stroke-dashoffset="4.4"/><path d="M8.1,30.8H108.2" stroke="#444" stroke-width="0.9" stroke-dasharray="20 1" stroke-dashoffset="0.7"/><rect x="10.8" y="32.8" width="2.7" height="2.5" fill="#444"/><path d="M15.3,34.0H53.2" stroke="#333" stroke-width="1"/><path d="M40.6,37.1H77.5" stroke="#333" stroke-width="1.1"/><path d="M8.1,39.6H108.2" stroke="#333" stroke-width="1" stroke-dasharray="5 1.1" stroke-dashoffset="6.1"/><path d="M8.1,41.2H108.2" stroke="#333" stroke-width="1" stroke-dasharray="5 1.1" stroke-dashoffset="0.4"/><path d="M8.1,42.8H80.2" stroke="#666" stroke-width="0.9" stroke-dasharray="17 .8" stroke-dashoffset="5.2"/><path d="M81.2,42.8H97.9" stroke="#4b6df0" stroke-width="1"/><path d="M99.2,42.8H108.2" stroke="#666" stroke-width="0.9"/><path d="M8.1,44.5H108.2" stroke="#777" stroke-width="0.8" stroke-dasharray="12 1" stroke-dashoffset="0.8"/><path d="M8.1,45.9H87.5" stroke="#777" stroke-width="0.8" stroke-dasharray="12 1" stroke-dashoffset="1.1"/><rect x="8.1" y="49.0" width="2.2" height="2.2" fill="#555"/><rect x="37.0" y="49.0" width="2.2" height="2.2" fill="#555"/><rect x="63.7" y="49.0" width="2.2" height="2.2" fill="#555"/><path d="M11.4,49.7H17.1" stroke="#777" stroke-width="0.8"/><path d="M40.2,49.7H46.0" stroke="#777" stroke-width="0.8"/><path d="M11.4,51.5H16.2" stroke="#999" stroke-width="0.7"/><path d="M40.2,51.5H45.1" stroke="#999" stroke-width="0.7"/><path d="M67.6,49.3H107.3" stroke="#888" stroke-width="0.7" stroke-dasharray="10 1" stroke-dashoffset="5.1"/><path d="M67.6,50.8H107.3" stroke="#888" stroke-width="0.7" stroke-dasharray="10 1" stroke-dashoffset="9.9"/><path d="M67.6,52.2H107.3" stroke="#888" stroke-width="0.7" stroke-dasharray="10 1" stroke-dashoffset="1.5"/><path d="M60.1,54.2V60.5" stroke="#444" stroke-width="0.7"/><path d="M8.5,55.6H56.8" stroke="#777" stroke-width="0.8"/><path d="M10.8,57.3H47.8" stroke="#999" stroke-width="0.7"/><path d="M61.3,55.6H107.3" stroke="#777" stroke-width="0.8"/><path d="M64.0,57.3H87.5" stroke="#999" stroke-width="0.7"/><path d="M37.0,61.6H80.2" stroke="#333" stroke-width="1.1"/><path d="M8.1,64.1H108.2" stroke="#2a2a2a" stroke-width="1.05" stroke-dasharray="5 1" stroke-dashoffset="2.7"/><path d="M8.1,65.7H108.2" stroke="#2a2a2a" stroke-width="1.05" stroke-dasharray="5 1" stroke-dashoffset="7.5"/><path d="M8.1,67.4H98.3" stroke="#444" stroke-width="1" stroke-dasharray="19 .7" stroke-dashoffset="11.4"/><path d="M8.1,70.1H108.2" stroke="#777" stroke-width="0.8" stroke-dasharray="11 1" stroke-dashoffset="6.9"/><path d="M8.1,71.7H76.6" stroke="#777" stroke-width="0.8" stroke-dasharray="11 1" stroke-dashoffset="4.8"/><path d="M8.1,73.7H108.2" stroke="#6a6a6a" stroke-width="0.8" stroke-dasharray="13 1" stroke-dashoffset="11.7"/><path d="M8.1,75.3H108.2" stroke="#6a6a6a" stroke-width="0.8" stroke-dasharray="13 1" stroke-dashoffset="0.6"/><path d="M8.1,76.9H108.2" stroke="#6a6a6a" stroke-width="0.8" stroke-dasharray="13 1" stroke-dashoffset="10.3"/><path d="M8.1,78.4H108.2" stroke="#555" stroke-width="0.9" stroke-dasharray="13 1" stroke-dashoffset="3.5"/><path d="M8.1,79.8H37.0" stroke="#333" stroke-width="1"/><path d="M8.1,81.6H108.2" stroke="#2a2a2a" stroke-width="1.05" stroke-dasharray="5 1" stroke-dashoffset="1.7"/><path d="M8.1,83.2H108.2" stroke="#2a2a2a" stroke-width="1.05" stroke-dasharray="5 1" stroke-dashoffset="1.4"/><path d="M8.1,84.9H108.2" stroke="#555" stroke-width="0.9" stroke-dasharray="15 1" stroke-dashoffset="3.7"/><path d="M8.1,86.3H14.4" stroke="#777" stroke-width="0.8"/><rect x="8.1" y="87.6" width="2.2" height="2.3" fill="#555"/><path d="M11.7,88.5H107.3" stroke="#777" stroke-width="0.8" stroke-dasharray="12 1" stroke-dashoffset="9.8"/><path d="M11.7,90.1H26.2" stroke="#888" stroke-width="0.8"/><rect x="7.2" y="91.4" width="68.5" height="4.7" fill="#c9c9c9"/><path d="M75.7,91.2V96.2" stroke="#444" stroke-width="0.7"/><path d="M8.1,93.0H51.4" stroke="#555" stroke-width="0.8"/><path d="M77.0,93.0H91.1" stroke="#777" stroke-width="0.8"/><path d="M42.4,97.3H74.8" stroke="#333" stroke-width="1.1"/><path d="M61.3,98.4V110.1" stroke="#333" stroke-width="0.9"/><path d="M8.1,99.8H56.8" stroke="#555" stroke-width="0.8"/><path d="M62.6,99.8H101.9" stroke="#777" stroke-width="0.8"/><path d="M8.1,105.6H56.8" stroke="#555" stroke-width="0.8"/><path d="M62.6,105.6H101.9" stroke="#777" stroke-width="0.8"/><path d="M8.1,112.4H108.2" stroke="#333" stroke-width="0.95" stroke-dasharray="4.5 1.1" stroke-dashoffset="2.2"/><path d="M8.1,114.1H108.2" stroke="#333" stroke-width="0.95" stroke-dasharray="4.5 1.1" stroke-dashoffset="7.0"/><path d="M8.1,115.7H108.2" stroke="#333" stroke-width="0.95" stroke-dasharray="4.5 1.1" stroke-dashoffset="7.7"/><path d="M8.1,117.3H108.2" stroke="#333" stroke-width="0.95" stroke-dasharray="4.5 1.1" stroke-dashoffset="4.5"/><path d="M8.1,118.9H108.2" stroke="#333" stroke-width="0.95" stroke-dasharray="4.5 1.1" stroke-dashoffset="6.6"/><path d="M8.1,120.6H108.2" stroke="#333" stroke-width="0.95" stroke-dasharray="4.5 1.1" stroke-dashoffset="0.8"/><path d="M8.1,122.2H108.2" stroke="#333" stroke-width="0.95" stroke-dasharray="4.5 1.1" stroke-dashoffset="0.7"/><path d="M8.1,123.8H108.2" stroke="#333" stroke-width="0.95" stroke-dasharray="4.5 1.1" stroke-dashoffset="2.5"/><path d="M8.1,125.4H108.2" stroke="#333" stroke-width="0.95" stroke-dasharray="4.5 1.1" stroke-dashoffset="8.2"/><path d="M8.1,127.1H94.7" stroke="#333" stroke-width="0.95" stroke-dasharray="4.5 1.1" stroke-dashoffset="5.1"/><path d="M8.1,128.7H108.2" stroke="#666" stroke-width="0.9" stroke-dasharray="15 .9" stroke-dashoffset="3.8"/><path d="M8.1,130.3H108.2" stroke="#666" stroke-width="0.9" stroke-dasharray="15 .9" stroke-dashoffset="7.0"/><path d="M8.1,131.7H11.7" stroke="#666" stroke-width="0.9"/><path d="M12.6,131.7H33.4" stroke="#4b6df0" stroke-width="1.1"/><path d="M34.3,131.7H108.2" stroke="#777" stroke-width="0.8" stroke-dasharray="15 .9" stroke-dashoffset="5.4"/><path d="M7.2,134.4H23.5" stroke="#777" stroke-width="0.8"/><path d="M105.1,134.4H109.1" stroke="#555" stroke-width="0.9"/></svg>
<div class="abs num" style="left:10px;top:476px">8</div>
<div class="abs" style="left:150.5px;top:46px;width:16px;height:518px;background:#f1f1f1"></div>
<div class="abs" style="left:152px;top:385px;width:13px;height:165px;background:#c1c1c1"></div>
<svg class="abs" style="left:150.5px;top:46px" width="16" height="518" viewBox="0 0 16 518"><path d="M4.4,11.2 L8,7 L11.6,11.2 Z" fill="#505050"/><path d="M4.4,509 L8,513.2 L11.6,509 Z" fill="#8a8a8a"/></svg>
<!--SIDE_END-->
  </div>
  <div id="main">
    <div id="page">
<!--PAGE_START-->
<div class="abs" style="left:40.00px;top:230.50px;width:467.00px;height:29.50px;background:#e4e4e4"></div>
<div class="abs" style="left:515.20px;top:245.80px;width:115.80px;height:15.20px;background:#d5e4fc;border:1px solid #a8c5f6;border-radius:1.5px"></div>
<div class="abs" style="left:423.00px;top:292.00px;width:315.00px;height:29.60px;background:#d5e4fc;border:1px solid #a8c5f6;border-radius:1.5px"></div>
<div class="abs" style="left:423.00px;top:338.20px;width:315.00px;height:29.30px;background:#d5e4fc;border:1px solid #a8c5f6;border-radius:1.5px"></div>
<div class="abs" style="left:48.00px;top:202.00px;width:11.30px;height:10.80px;background:#d5e4fc;border:1px solid #86a8ea"></div>
<div class="abs" style="left:38.50px;top:-0.50px;width:2.10px;height:538.00px;background:#0a0a0a"></div>
<div class="abs" style="left:744.20px;top:-0.50px;width:2.00px;height:538.00px;background:#0a0a0a"></div>
<div class="abs" style="left:39.40px;top:-0.80px;width:706.00px;height:1.80px;background:#555"></div>
<div class="abs" style="left:39.40px;top:14.20px;width:706.00px;height:1.40px;background:#383838"></div>
<div class="abs" style="left:39.40px;top:144.80px;width:706.00px;height:1.20px;background:#383838"></div>
<div class="abs" style="left:39.40px;top:229.60px;width:706.00px;height:1.40px;background:#383838"></div>
<div class="abs" style="left:39.40px;top:259.50px;width:706.00px;height:2.50px;background:#111"></div>
<div class="abs" style="left:39.40px;top:275.80px;width:706.00px;height:1.20px;background:#383838"></div>
<div class="abs" style="left:39.40px;top:322.00px;width:706.00px;height:1.20px;background:#383838"></div>
<div class="abs" style="left:39.40px;top:367.00px;width:706.00px;height:2.00px;background:#111"></div>
<div class="abs" style="left:39.40px;top:535.50px;width:706.00px;height:2.50px;background:#111"></div>
<div class="abs" style="left:506.80px;top:230.00px;width:1.20px;height:30.00px;background:#2b2b2b"></div>
<div class="abs" style="left:414.80px;top:276.00px;width:1.20px;height:92.00px;background:#2b2b2b"></div>
<div class="abs ab" id="h5" style="left:244.75px;top:2.00px;font-size:11.2px;letter-spacing:0.2287px;word-spacing:0.0000px;">SECTION V: CLAIM CERTIFICATION AND SIGNATURE</div>
<div class="abs s" id="p1a" style="left:45.90px;top:19.00px;font-size:11.55px;letter-spacing:0.0011px;word-spacing:0.0000px;">I certify and authorize the release of information. I certify that the statements in this document are true and complete to the best of my knowledge. I</div>
<div class="abs s" id="p1b" style="left:45.90px;top:32.00px;font-size:11.55px;letter-spacing:0.0155px;word-spacing:0.0000px;">authorize any person or entity, including but not limited to any organization, service provider, employer, or government agency, to give the</div>
<div class="abs s" id="p1c" style="left:45.90px;top:45.00px;font-size:11.55px;letter-spacing:0.0121px;word-spacing:0.0000px;">Department of Veterans Affairs any information about me, and I waive any privilege which makes the information confidential.</div>
<div class="abs s" id="p2a" style="left:45.90px;top:63.00px;font-size:11.55px;letter-spacing:0.0074px;word-spacing:0.0000px;">I certify I have received the notice attached to this application titled, <b><i>Notice to Veteran/Service Member of Evidence Necessary to Substantiate a</i></b></div>
<div class="abs s" id="p2b" style="left:45.90px;top:76.00px;font-size:11.55px;letter-spacing:0.0059px;word-spacing:0.0000px;"><b><i>Claim for Veterans Disability Compensation and Related Compensation Benefits.</i></b></div>
<div class="abs s" id="p3a" style="left:45.90px;top:93.00px;font-size:11.55px;letter-spacing:-0.0022px;word-spacing:0.0000px;">I certify I have enclosed all the information or evidence that will support my claim, to include an identification of relevant records available at a</div>
<div class="abs s" id="p3b" style="left:45.90px;top:106.00px;font-size:11.55px;letter-spacing:0.0284px;word-spacing:0.0000px;">Federal facility such as a VA medical center; <b>OR,</b> I have no information or evidence to give VA to support my claim; <b>OR</b>, I have checked the box in</div>
<div class="abs s" id="p3c" style="left:45.90px;top:118.00px;font-size:11.55px;letter-spacing:-0.0017px;word-spacing:0.0000px;">Item 21, indicating that I do not want my claim considered for rapid processing in the Fully Developed Claim (FDC) Program because I plan to</div>
<div class="abs s" id="p3d" style="left:45.90px;top:131.00px;font-size:11.55px;letter-spacing:-0.0112px;word-spacing:0.0000px;">submit further evidence in support of my claim.</div>
<div class="abs s" id="p4a" style="left:45.90px;top:147.00px;font-size:11.55px;letter-spacing:0.0065px;word-spacing:0.0000px;">21. The FDC Program is designed to rapidly process compensation or pension claims received with the evidence necessary to decide the claim. VA</div>
<div class="abs s" id="p4b" style="left:45.90px;top:160.00px;font-size:11.55px;letter-spacing:0.0060px;word-spacing:0.0000px;">will automatically consider a claim submitted on this form for rapid processing under the FDC Program. Check the box below <b>ONLY if you DO</b></div>
<div class="abs s" id="p4c" style="left:45.90px;top:173.00px;font-size:11.55px;letter-spacing:0.0087px;word-spacing:0.0000px;"><b>NOT want your claim considered for rapid processing</b> under the FDC Program because you plan on submitting further evidence in support of</div>
<div class="abs s" id="p4d" style="left:45.90px;top:186.00px;font-size:11.55px;letter-spacing:-0.0446px;word-spacing:0.0000px;">your claim.</div>
<div class="abs a" id="cb1" style="left:68.50px;top:201.00px;font-size:11.5px;letter-spacing:0.0130px;word-spacing:0.0000px;"><b>I DO NOT want my claim considered for rapid processing</b> under the FDC Program because I plan to submit further evidence in</div>
<div class="abs a" id="cb2" style="left:68.50px;top:214.00px;font-size:11.5px;letter-spacing:-0.0203px;word-spacing:0.0000px;">support of my claim.</div>
<div class="abs a" id="l22a" style="left:46.30px;top:232.00px;font-size:10.25px;letter-spacing:0.0140px;word-spacing:0.0000px;">22A. VETERAN/SERVICE MEMBER SIGNATURE (<b>REQUIRED</b>)</div>
<div class="abs a" id="l22b" style="left:515.30px;top:232.00px;font-size:10.25px;letter-spacing:0.0334px;word-spacing:0.0000px;">22B. DATE SIGNED</div>
<div class="abs ab" id="h6" style="left:278.00px;top:264.00px;font-size:11.2px;letter-spacing:0.1916px;word-spacing:0.0000px;">SECTION VI: WITNESSES TO SIGNATURE</div>
<div class="abs a" id="l23a" style="left:46.30px;top:278.00px;font-size:10.25px;letter-spacing:0.0126px;word-spacing:0.0000px;">23A. SIGNATURE OF WITNESS (If veteran signed above using an &quot;X&quot;)</div>
<div class="abs a" id="l23b" style="left:423.00px;top:278.00px;font-size:10.25px;letter-spacing:0.0305px;word-spacing:0.0000px;">23B. PRINTED NAME AND ADDRESS OF WITNESS</div>
<div class="abs a" id="l24a" style="left:46.30px;top:324.00px;font-size:10.25px;letter-spacing:0.0126px;word-spacing:0.0000px;">24A. SIGNATURE OF WITNESS (If veteran signed above using an &quot;X&quot;)</div>
<div class="abs a" id="l24b" style="left:423.00px;top:324.00px;font-size:10.25px;letter-spacing:0.0305px;word-spacing:0.0000px;">24B. PRINTED NAME AND ADDRESS OF WITNESS</div>
<div class="abs s" id="pv0" style="left:45.90px;top:371.00px;font-size:10.3px;letter-spacing:0.0000px;word-spacing:0.1771px;transform:scaleX(.874);transform-origin:0 0;"><b>PRIVACY ACT NOTICE</b>: The form will be used to determine allowance to compensation benefits (38 U.S.C. 5101). The responses you submit are considered confidential (38 U.S.C. 5701).</div>
<div class="abs s" id="pv1" style="left:45.90px;top:382.00px;font-size:10.3px;letter-spacing:0.0000px;word-spacing:0.3598px;transform:scaleX(.874);transform-origin:0 0;">VA may disclose the information that you provide, including Social Security numbers, outside VA if the disclosure is authorized under the Privacy Act, including the routine uses identified in</div>
<div class="abs s" id="pv2" style="left:45.90px;top:393.00px;font-size:10.3px;letter-spacing:0.0000px;word-spacing:0.5405px;transform:scaleX(.874);transform-origin:0 0;">the VA system of records, 58VA21/22/28, Compensation, Pension, Education, and Vocational Rehabilitation and Employment Records - VA, published in the Federal Register. The requested</div>
<div class="abs s" id="pv3" style="left:45.90px;top:404.00px;font-size:10.3px;letter-spacing:0.0000px;word-spacing:0.9305px;transform:scaleX(.874);transform-origin:0 0;">information is considered relevant and necessary to determine maximum benefits under the law. Information submitted is subject to verification through computer matching programs with</div>
<div class="abs s" id="pv4" style="left:45.90px;top:415.00px;font-size:10.3px;letter-spacing:0.0000px;word-spacing:0.7928px;transform:scaleX(.874);transform-origin:0 0;">other agencies. VA may make a &quot;routine use&quot; disclosure for: civil or criminal law enforcement, congressional communications, epidemiological or research studies, the collection of money</div>
<div class="abs s" id="pv5" style="left:45.90px;top:425.00px;font-size:10.3px;letter-spacing:0.0000px;word-spacing:0.4193px;transform:scaleX(.874);transform-origin:0 0;">owed to the United States, litigation in which the United States is a party or has an interest, the administration of VA programs and delivery of VA benefits, verification of identity and status,</div>
<div class="abs s" id="pv6" style="left:45.90px;top:436.00px;font-size:10.3px;letter-spacing:0.0000px;word-spacing:0.8297px;transform:scaleX(.874);transform-origin:0 0;">and personnel administration. Your obligation to respond is required in order to obtain or retain benefits. Information that you furnish may be utilized in computer matching programs with</div>
<div class="abs s" id="pv7" style="left:45.90px;top:447.00px;font-size:10.3px;letter-spacing:0.0000px;word-spacing:0.2577px;transform:scaleX(.874);transform-origin:0 0;">other Federal or State agencies for the purpose of determining your eligibility to receive VA benefits, as well as to collect any amount owed to the United States by virtue of your participation</div>
<div class="abs s" id="pv8" style="left:45.90px;top:458.00px;font-size:10.3px;letter-spacing:0.0000px;word-spacing:0.8003px;transform:scaleX(.874);transform-origin:0 0;">in any benefit program administered by the Department of Veterans Affairs. Social Security information: You are required to provide the Social Security number requested under 38 U.S.C.</div>
<div class="abs s" id="pv9" style="left:45.90px;top:469.00px;font-size:10.3px;letter-spacing:0.0027px;word-spacing:0.0000px;transform:scaleX(.874);transform-origin:0 0;">5101(c)(1). VA may disclose Social Security numbers as authorized under the Privacy Act, and, specifically may disclose them for purposes stated above.</div>
<div class="abs s" id="rb0" style="left:45.90px;top:485.00px;font-size:10.3px;letter-spacing:0.0000px;word-spacing:0.2840px;transform:scaleX(.874);transform-origin:0 0;"><b>RESPONDENT BURDEN</b>: We need this information to determine your eligibility for compensation. Title 38, United States Code, allows us to ask for this information. We estimate that you</div>
<div class="abs s" id="rb1" style="left:45.90px;top:495.00px;font-size:10.3px;letter-spacing:0.0000px;word-spacing:0.9024px;transform:scaleX(.874);transform-origin:0 0;">will need an average of 25 minutes to review the instructions, find the information, and complete this form. VA cannot conduct or sponsor a collection of information unless a valid OMB</div>
<div class="abs s" id="rb2" style="left:45.90px;top:506.00px;font-size:10.3px;letter-spacing:0.0000px;word-spacing:0.6359px;transform:scaleX(.874);transform-origin:0 0;">control number is displayed. You are not required to respond to a collection of information if this number is not displayed. Valid OMB control numbers can be located on the OMB Internet</div>
<div class="abs s" id="rb3" style="left:45.90px;top:517.00px;font-size:10.3px;letter-spacing:-0.0063px;word-spacing:0.0000px;transform:scaleX(.874);transform-origin:0 0;">Page at&nbsp; <span class="lnk">www.reginfo.gov/public/do/PRAMain</span>. If desired, you can call 1-800-827-1000 to get information on where to send comments or suggestions about this form.</div>
<div class="abs a" id="ft1" style="left:38.80px;top:540.00px;font-size:10px;letter-spacing:0.1716px;word-spacing:0.0000px;">VA FORM 21-526EZ, JAN 2014</div>
<div class="abs a" id="ft2" style="left:710.00px;top:539.00px;font-size:11.2px;letter-spacing:0.0396px;word-spacing:0.0000px;">Page 8</div>
<!--PAGE_END-->
    </div>
  </div>
</div>
</body>
</html>
